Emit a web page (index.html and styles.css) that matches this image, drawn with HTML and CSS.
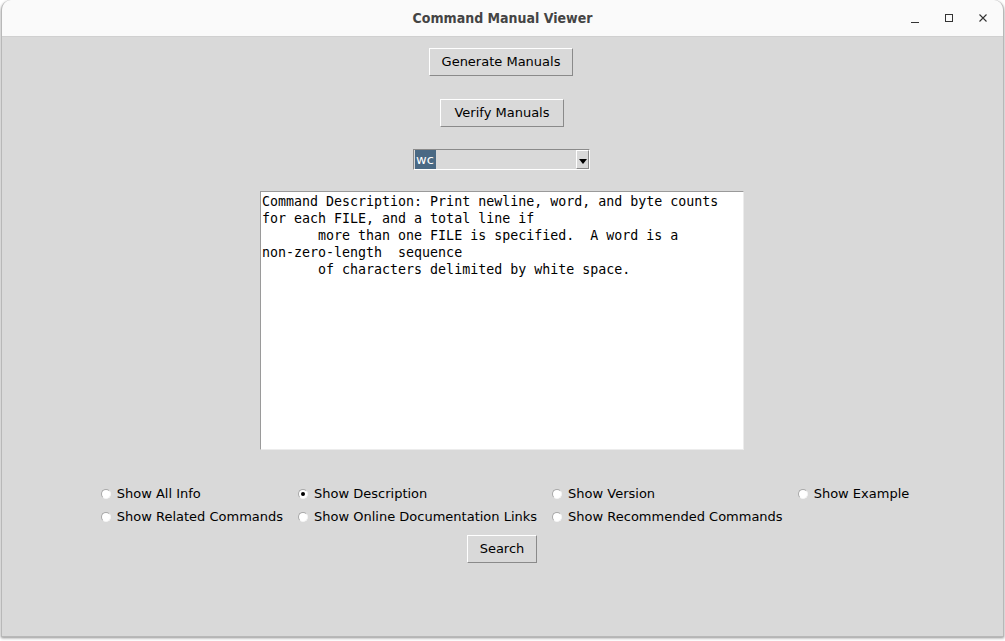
FILE: index.html
```html
<!DOCTYPE html>
<html>
<head>
<meta charset="utf-8">
<link rel="stylesheet" href="styles.css">
</head>
<body>
<div class="window">
  <div class="titlebar">
    <div class="title">Command Manual Viewer</div>
    <div class="controls">
      <svg class="ctl" width="12" height="12" viewBox="0 0 12 12"><path d="M2 10.5h8" stroke="#333" stroke-width="1"/></svg>
      <svg class="ctl" width="12" height="12" viewBox="0 0 12 12"><rect x="2.5" y="2.5" width="7" height="7" fill="none" stroke="#333" stroke-width="1"/></svg>
      <svg class="ctl" width="12" height="12" viewBox="0 0 12 12"><path d="M2.5 2.5l7 7M9.5 2.5l-7 7" stroke="#333" stroke-width="1.1"/></svg>
    </div>
  </div>
  <div class="content">
    <button class="tkbtn gen">Generate Manuals</button>
    <button class="tkbtn ver">Verify Manuals</button>
    <div class="combo">
      <span class="sel">wc</span>
      <span class="arrow"><svg width="8" height="5" viewBox="0 0 8 5"><path d="M0 0h8L4 5z" fill="#000"/></svg></span>
    </div>
    <div class="textbox">Command Description: Print newline, word, and byte counts
for each FILE, and a total line if
       more than one FILE is specified.  A word is a
non-zero-length  sequence
       of characters delimited by white space.</div>
    <div class="radios">
      <label class="radio"><span class="dot"></span>Show All Info</label>
      <label class="radio"><span class="dot on"></span>Show Description</label>
      <label class="radio"><span class="dot"></span>Show Version</label>
      <label class="radio"><span class="dot"></span>Show Example</label>
      <label class="radio"><span class="dot"></span>Show Related Commands</label>
      <label class="radio"><span class="dot"></span>Show Online Documentation Links</label>
      <label class="radio"><span class="dot"></span>Show Recommended Commands</label>
    </div>
    <button class="tkbtn search">Search</button>
  </div>
</div>
</body>
</html>
```
FILE: styles.css
```css
html, body {
  margin: 0;
  padding: 0;
  background: #ffffff;
  width: 1005px;
  height: 641px;
  overflow: hidden;
}
.window {
  width: 1003px;
  height: 637px;
  margin-left: 1px;
  display: flex;
  flex-direction: column;
  border-radius: 10px 10px 0 0;
  box-shadow: 0 1px 3px rgba(0,0,0,0.45);
  border: 1px solid #b8b8b8;
  border-top: none;
  box-sizing: border-box;
  background: #d9d9d9;
  overflow: hidden;
}
.titlebar {
  height: 37px;
  flex: none;
  background: #fafafa;
  border-bottom: 1px solid #d0d0d0;
  box-sizing: border-box;
  position: relative;
  display: flex;
  align-items: center;
  justify-content: center;
}
.title {
  font-family: "DejaVu Sans", sans-serif;
  font-stretch: condensed;
  font-weight: bold;
  font-size: 14px;
  color: #444444;
}
.controls {
  position: absolute;
  right: 14px;
  top: 12px;
  display: flex;
  gap: 22px;
}
.ctl { display: block; }
.content {
  flex: 1;
  display: flex;
  flex-direction: column;
  align-items: center;
  padding-right: 3px;
  font-family: "DejaVu Sans", sans-serif;
  font-size: 13px;
  color: #000;
}
.tkbtn {
  font-family: "DejaVu Sans", sans-serif;
  font-size: 13px;
  color: #000;
  background: #d9d9d9;
  border: 1px solid;
  border-color: #ffffff #8a8a8a #8a8a8a #ffffff;
  height: 28px;
  padding: 0;
  margin: 0;
  line-height: 26px;
}
.gen { margin-top: 11px; width: 144px; }
.ver { margin-top: 23px; width: 124px; margin-left: 2px; }
.combo {
  margin-top: 22px;
  width: 177px;
  height: 21px;
  margin-left: 1px;
  box-sizing: border-box;
  border: 1px solid;
  border-color: #8a8a8a #ffffff #ffffff #8a8a8a;
  display: flex;
  align-items: stretch;
  justify-content: space-between;
  background: #d9d9d9;
}
.sel {
  background: #4a6984;
  color: #ffffff;
  font-size: 13px;
  line-height: 19px;
  padding: 0 2px 0 1px;
  margin: 0 0 0 1px;
  height: 19px;
}
.arrow {
  width: 13px;
  box-sizing: border-box;
  border: 1px solid;
  border-color: #ffffff #8a8a8a #8a8a8a #ffffff;
  display: flex;
  align-items: center;
  justify-content: center;
  padding-top: 3px;
}
.arrow svg { display: block; }
.textbox {
  margin-top: 21px;
  width: 484px;
  height: 259px;
  box-sizing: border-box;
  background: #ffffff;
  border: 1px solid;
  border-color: #9a9a9a #ececec #ececec #9a9a9a;
  font-family: "DejaVu Sans Mono", monospace;
  font-size: 13.3px;
  line-height: 17px;
  white-space: pre;
  padding: 1px 1px;
  margin-left: 2px;
}
.radios {
  margin-top: 32px;
  display: grid;
  grid-template-columns: auto auto auto auto;
  grid-auto-rows: 23px;
  column-gap: 14px;
  margin-left: 7px;
}
.radio {
  display: flex;
  align-items: center;
  white-space: nowrap;
  gap: 6px;
}
.dot {
  width: 10px;
  height: 10px;
  border-radius: 50%;
  background: #ffffff;
  box-sizing: border-box;
  border: 1px solid;
  border-color: #a8a8a8 #f4f4f4 #f4f4f4 #a8a8a8;
  position: relative;
  flex: none;
  margin-left: 1px;
}
.dot.on::after {
  content: "";
  position: absolute;
  left: 2px;
  top: 2px;
  width: 4px;
  height: 4px;
  border-radius: 50%;
  background: #000;
}
.search { margin-top: 7px; width: 70px; margin-left: 2px; }
```
